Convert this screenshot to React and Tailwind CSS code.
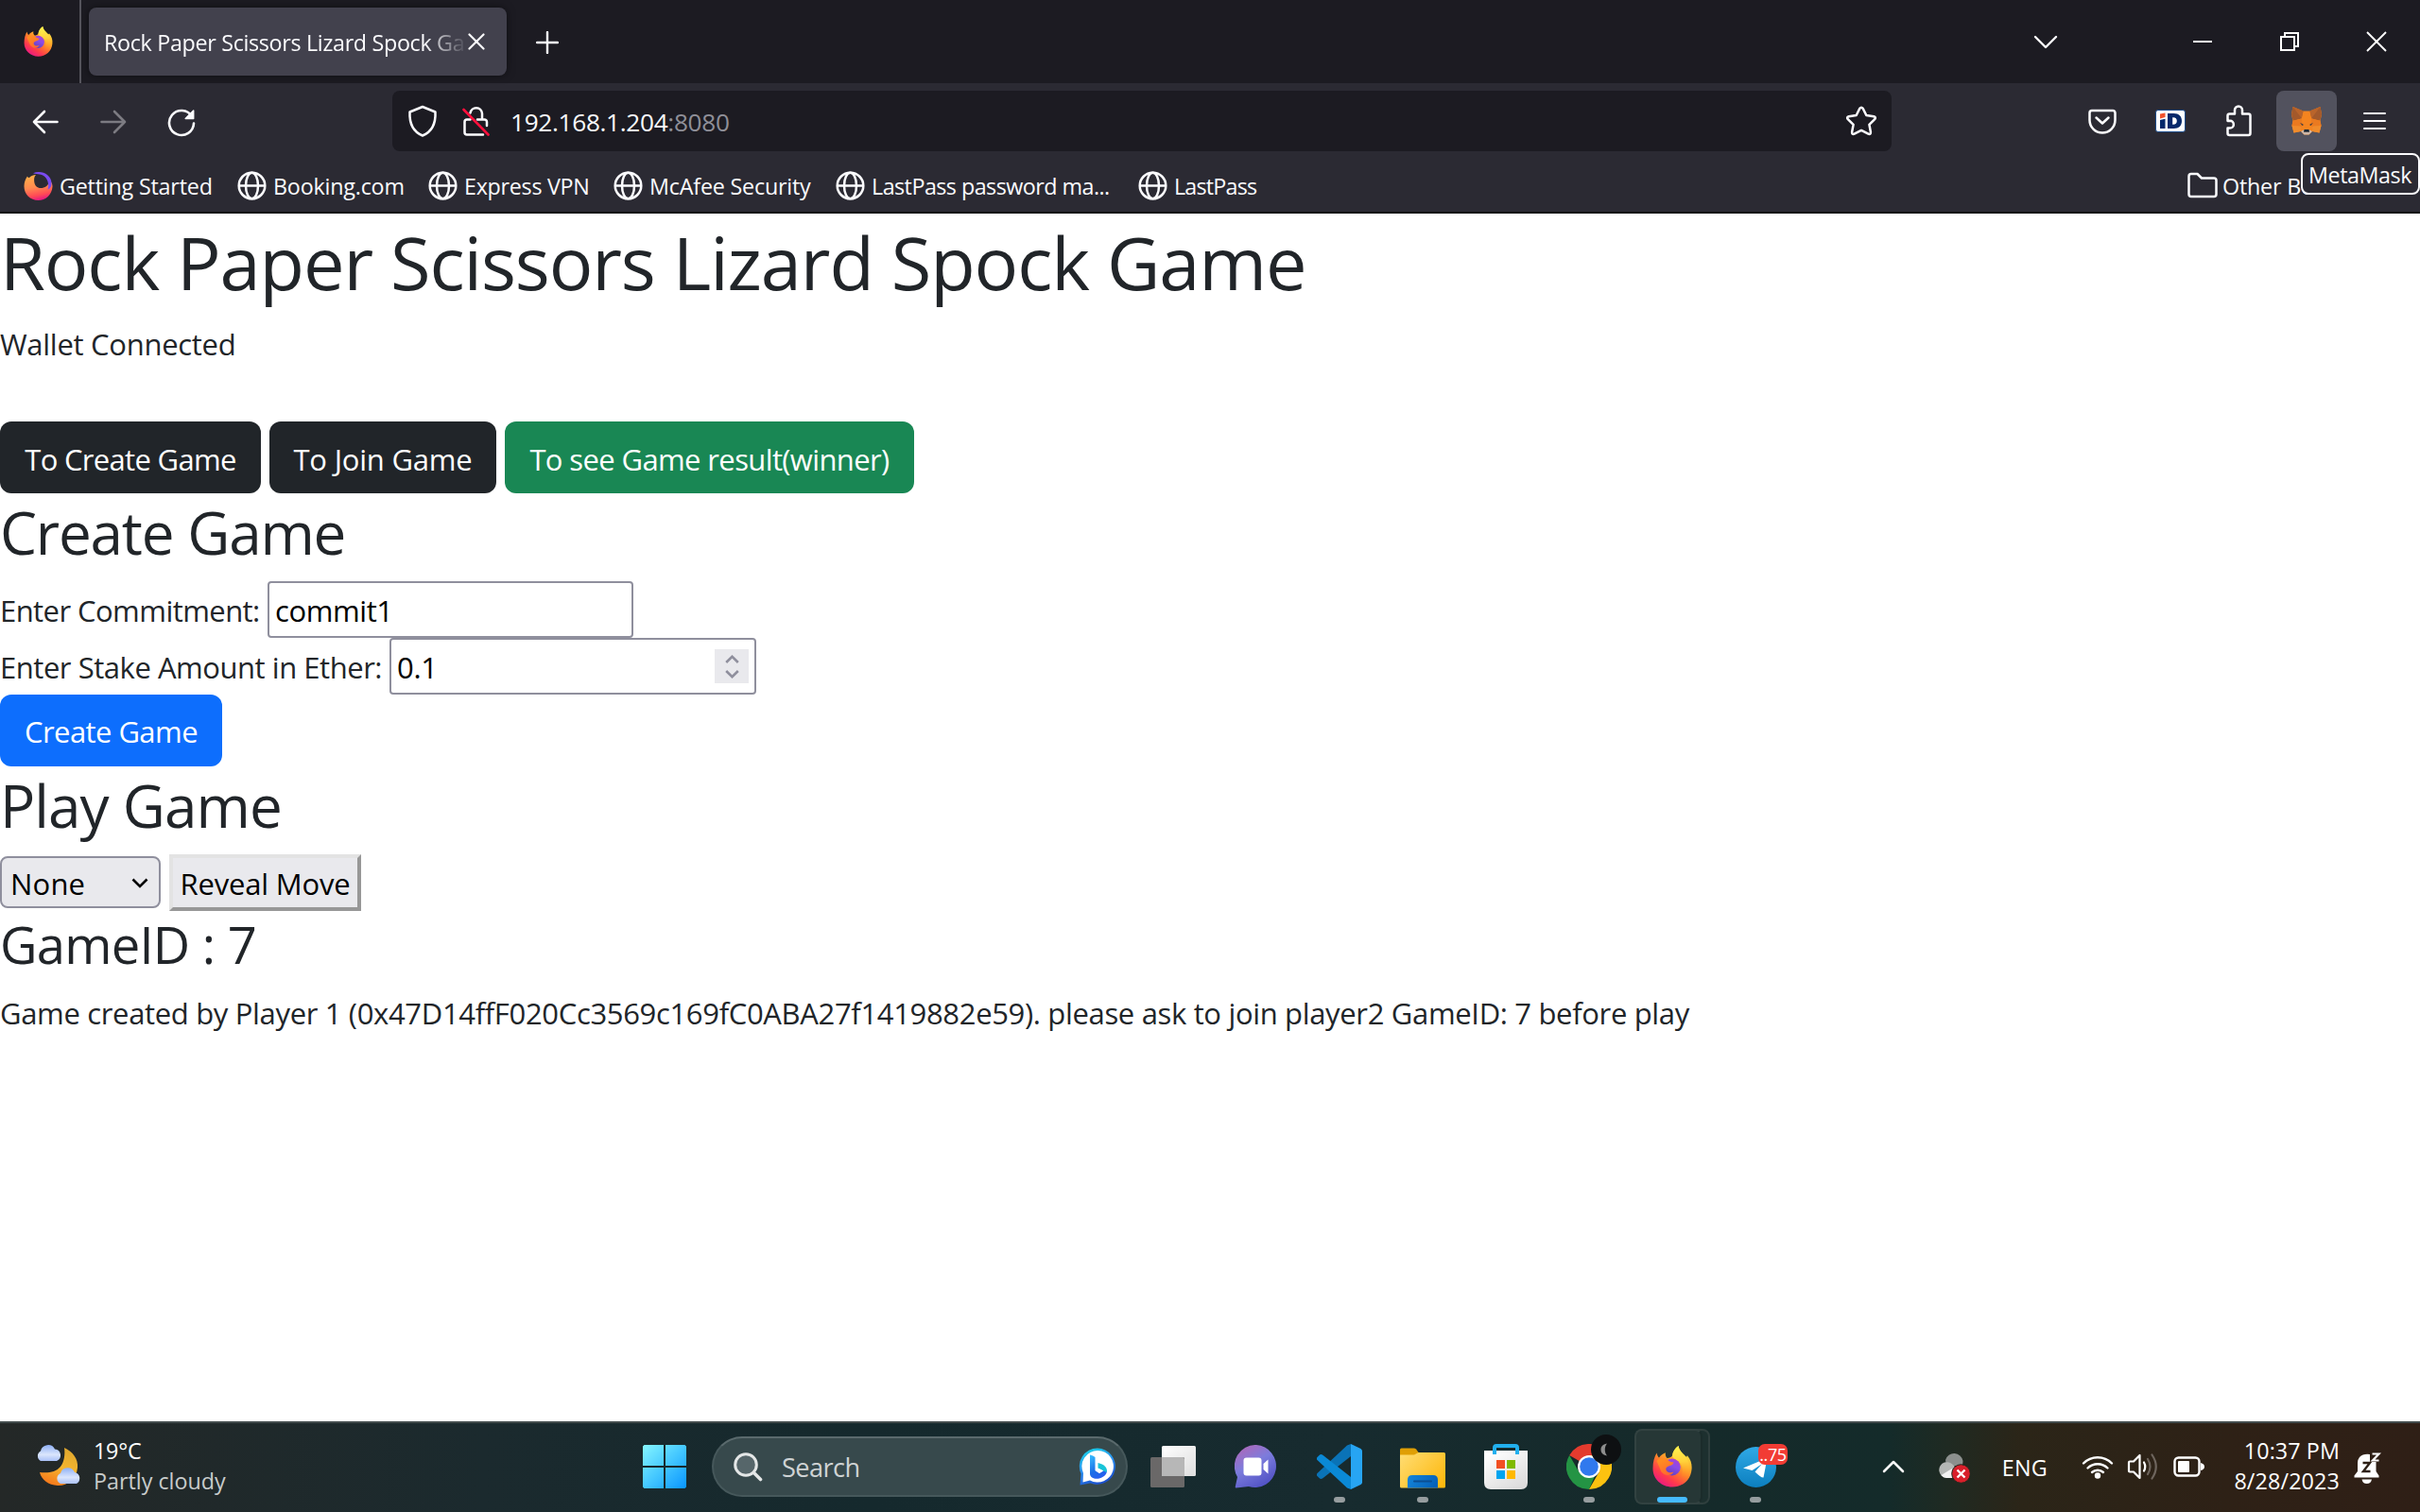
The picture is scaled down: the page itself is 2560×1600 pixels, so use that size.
import React from 'react';

function FirefoxLogo({ className, id }) {
  return (
    <svg className={className} viewBox="0 0 42 44" fill="none">
      <defs>
        <linearGradient id={`${id}-body`} x1="34" y1="4" x2="8" y2="42" gradientUnits="userSpaceOnUse">
          <stop offset="0" stopColor="#ffe847" />
          <stop offset=".3" stopColor="#ffb02a" />
          <stop offset=".52" stopColor="#ff7a2c" />
          <stop offset=".75" stopColor="#ff3a4c" />
          <stop offset="1" stopColor="#e5158a" />
        </linearGradient>
        <linearGradient id={`${id}-tail`} x1="28" y1="0" x2="32" y2="34" gradientUnits="userSpaceOnUse">
          <stop offset="0" stopColor="#fff44f" />
          <stop offset=".5" stopColor="#ffd13a" />
          <stop offset="1" stopColor="#ff8b1e" stopOpacity="0" />
        </linearGradient>
        <linearGradient id={`${id}-globe`} x1="26" y1="12" x2="16" y2="32" gradientUnits="userSpaceOnUse">
          <stop offset="0" stopColor="#b43fd0" />
          <stop offset=".45" stopColor="#8a4be8" />
          <stop offset="1" stopColor="#5b3fb5" />
        </linearGradient>
        <linearGradient id={`${id}-face`} x1="6" y1="10" x2="16" y2="30" gradientUnits="userSpaceOnUse">
          <stop offset="0" stopColor="#ff9a1c" />
          <stop offset="1" stopColor="#ff6a2e" />
        </linearGradient>
      </defs>
      <path
        d="M4.5 7.5C5 10 6 11.5 7 12.5C9 9.5 12 8 14 7.3C13.3 9 14 11.5 15.5 13C18 12.8 20 12 21 10.5C21.5 6 24 2.5 27.5 0C28 4 31 7 34 10C35.8 12 36.5 12 36.8 10C41 15 42 20 41.5 25C40.5 36 32 43.5 21 43.5C9.5 43.5.5 35 .5 24C.5 17 2 12 4.5 7.5Z"
        fill={`url(#${id}-body)`}
      />
      <path
        d="M27.5 0C28 4 31 7 34 10C39 15 40 22 37.5 28C36 33 32 36 28 36.5C32 32 33 26 30.5 20C28.5 15.5 21.5 14 21 10.5C21.5 6 24 2.500 27.500 0Z"
        fill={`url(#${id}-tail)`}
      />
      <circle cx="20.800" cy="22.500" r="9" fill={`url(#${id}-globe)`} />
      <path
        d="M4.500 16C7 12.500 12 12.500 15.500 13.500C16.500 15.500 18 17 22.500 17.600C22 19.800 20.500 20.600 17.500 21.300C14.500 22.300 13.600 24.200 14.800 26.200C16.400 28.800 20 28.600 22.500 27.600C20 32.500 13 32 9.500 27.500Z"
        fill={`url(#${id}-face)`}
      />
    </svg>
  );
}

function FirefoxSwirl({ className }) {
  return (
    <svg className={className} viewBox="0 0 31 31" fill="none">
      <defs>
        <linearGradient id="swirl" x1="12" y1="2" x2="18" y2="31" gradientUnits="userSpaceOnUse">
          <stop offset="0" stopColor="#ffb347" />
          <stop offset=".5" stopColor="#ff8a50" />
          <stop offset=".8" stopColor="#ff4a55" />
          <stop offset="1" stopColor="#e31587" />
        </linearGradient>
      </defs>
      <path
        d="M4 5.500C4.500 7 5.500 7.500 6.500 6.500C8 5 10.500 4 13 4C11 6 11 8 11.200 11C11.500 15.500 14.500 18 18 18C22.500 18 26 16 27.500 10C30 12 30.500 14 30.500 16.500C30 25 23.500 31 15.500 31C7 31 .5 24.500.5 16C.5 12 2 8 4 5.500Z"
        fill="url(#swirl)"
      />
      <path d="M10 2.200C18-1.500 29.500 3 29.500 13C29.500 17 27.500 19 25.500 19.500C27.500 13 25 5 17 3.500C14.500 3 12 3 10 2.200Z" fill="#7a4bf0" />
    </svg>
  );
}

function Globe() {
  return (
    <svg className="h-[31px] w-[31px]" viewBox="0 0 31 31" fill="none" stroke="#fbfbfe" strokeWidth="2.500">
      <circle cx="15.500" cy="15.500" r="13.800" />
      <ellipse cx="15.500" cy="15.500" rx="6.500" ry="13.800" />
      <path d="M2 15.500H29" />
    </svg>
  );
}

function TabBar() {
  return (
    <div className="flex h-[88px] bg-[#1c1b22]">
      <div className="flex w-[86px] items-center justify-center border-r-2 border-[#55545c]">
        <FirefoxLogo id="corner" className="mr-[4px] h-[32px] w-[31px]" />
      </div>
      <div className="mt-2 ml-2 flex h-[72px] w-[442px] items-center rounded-lg bg-[#42414d] shadow-[0_0_8px_rgba(0,0,0,0.5)]">
        <div className="ml-[16px] w-[381px] overflow-hidden pt-[3px] text-[23.3px] tracking-[-0.32px] whitespace-nowrap [mask-image:linear-gradient(to_right,black_89%,transparent_101%)]">
          Rock Paper Scissors Lizard Spock Game
        </div>
        <svg className="ml-[4px] h-[18px] w-[18px] shrink-0" viewBox="0 0 18 18" stroke="#fbfbfe" strokeWidth="2.200" strokeLinecap="round">
          <path d="M1.500 1.500L16.500 16.500M16.500 1.500L1.500 16.500" />
        </svg>
      </div>
      <div className="flex w-[86px] items-center justify-center">
        <svg className="mt-[2px] h-[24px] w-[24px]" viewBox="0 0 24 24" stroke="#fbfbfe" strokeWidth="2.400" strokeLinecap="round">
          <path d="M12 1V23M1 12H23" />
        </svg>
      </div>
      <div className="ml-auto flex items-center">
        <div className="mr-[74px] flex w-[92px] justify-center">
          <svg className="h-[15px] w-[26px]" viewBox="0 0 26 15" fill="none" stroke="#fbfbfe" strokeWidth="2.400" strokeLinecap="round" strokeLinejoin="round">
            <path d="M2 2L13 13L24 2" />
          </svg>
        </div>
        <div className="flex w-[92px] justify-center">
          <div className="h-[2px] w-[20px] bg-white" />
        </div>
        <div className="flex w-[92px] justify-center">
          <svg className="h-[20px] w-[20px]" viewBox="0 0 20 20" fill="none" stroke="#fff" strokeWidth="2">
            <path d="M1 5H15V19H1ZM5 5V1H19V15H15" />
          </svg>
        </div>
        <div className="flex w-[92px] justify-center">
          <svg className="h-[22px] w-[22px]" viewBox="0 0 22 22" stroke="#fff" strokeWidth="1.900">
            <path d="M1 1L21 21M21 1L1 21" />
          </svg>
        </div>
      </div>
    </div>
  );
}

function NavBar() {
  const cell = 'flex h-[80px] w-[72px] shrink-0 items-center justify-center';
  return (
    <div className="flex h-[80px] items-center pr-3 pl-3">
      <div className={cell}>
        <svg className="mt-[2px] h-[26px] w-[28px]" viewBox="0 0 28 26" fill="none" stroke="#fbfbfe" strokeWidth="2.600" strokeLinecap="round" strokeLinejoin="round">
          <path d="M13 2L2 13L13 24M2 13H26.500" />
        </svg>
      </div>
      <div className={cell}>
        <svg className="mt-[2px] h-[26px] w-[28px]" viewBox="0 0 28 26" fill="none" stroke="#7c7b82" strokeWidth="2.600" strokeLinecap="round" strokeLinejoin="round">
          <path d="M15 2L26 13L15 24M26 13H1.500" />
        </svg>
      </div>
      <div className={cell}>
        <svg className="mt-[3px] h-[30px] w-[30px]" viewBox="0 0 30 30" fill="none" stroke="#fbfbfe" strokeWidth="2.600" strokeLinecap="round">
          <path d="M26 8A13 13 0 1 0 28 15.500" />
          <path d="M27.700 2V10.500H19.200Z" fill="#fbfbfe" strokeLinejoin="round" strokeWidth="1.500" />
        </svg>
      </div>
      <div className="ml-[187px] flex h-[64px] w-[1586px] items-center rounded-lg bg-[#1c1b22] pr-[15px] pl-[16px]">
        <svg className="h-[34px] w-[32px]" viewBox="0 0 32 34" fill="none" stroke="#fbfbfe" strokeWidth="2.500" strokeLinejoin="round">
          <path d="M16 2L29.500 7.500C30 18 27 28 16 32.500C5 28 2 18 2.500 7.500Z" />
        </svg>
        <svg className="ml-[26px] h-[34px] w-[30px]" viewBox="0 0 30 34" fill="none" stroke="#fbfbfe" strokeWidth="2.500" strokeLinecap="round">
          <path d="M8.500 8.500A6.300 6.300 0 0 1 21 9V15.500M16 15.500H23.500A2.500 2.500 0 0 1 26 18V22M8.500 15.500H5A2.500 2.500 0 0 0 2.500 18V29A2.500 2.500 0 0 0 5 31.500H22" />
          <path d="M1.500 5L27.500 31.500" stroke="#ff0f3c" strokeWidth="2.600" />
        </svg>
        <div className="ml-[21px] pt-[4px] text-[26.2px] tracking-[-0.31px] text-[#fbfbfe]">
          192.168.1.204<span className="text-[#8f8f98]">:8080</span>
        </div>
        <svg className="ml-auto h-[32px] w-[34px]" viewBox="0 0 34 32" fill="none" stroke="#fbfbfe" strokeWidth="2.500" strokeLinejoin="round">
          <path d="M15.300 2.800Q17 .6 18.700 2.800L22.300 10L30.200 11.200Q33 12 31.200 14.200L25.400 19.800L26.900 27.800Q27 30.700 24.400 29.700L17 25.900L9.600 29.700Q7 30.700 7.100 27.800L8.600 19.800L2.800 14.200Q1 12 3.800 11.200L11.700 10Z" />
        </svg>
      </div>
      <div className="ml-auto flex">
        <div className={cell}>
          <svg className="h-[27px] w-[30px]" viewBox="0 0 30 27" fill="none" stroke="#fbfbfe" strokeWidth="2.500" strokeLinecap="round" strokeLinejoin="round">
            <path d="M4 2H26A2.500 2.500 0 0 1 28.500 4.500V12A13.500 13.500 0 0 1 1.500 12V4.500A2.500 2.500 0 0 1 4 2Z" />
            <path d="M8.500 9.500L15 15.500L21.500 9.500" />
          </svg>
        </div>
        <div className={cell}>
          <svg className="h-[24px] w-[32px]" viewBox="0 0 32 24">
            <rect x=".5" y=".5" width="31" height="23" rx="2.500" fill="#fff" stroke="#1d4c8a" />
            <path d="M5 4.500L10.500 3.500V8L5 9.500Z" fill="#f0532d" />
            <path d="M5 11L10.500 9.700V20H5Z" fill="#06296b" />
            <path d="M13 4H19.500C25 4 28 7 28 12S25 20 19.500 20H13ZM18.200 8.200V15.800C21.500 16 22.800 14.500 22.800 12S21.500 8 18.200 8.200Z" fill="#06296b" fillRule="evenodd" />
          </svg>
        </div>
        <div className={cell}>
          <svg className="h-[34px] w-[28px]" viewBox="0 0 28 34" fill="none" stroke="#fbfbfe" strokeWidth="2.500" strokeLinejoin="round">
            <path d="M2.500 17V11.500Q2.500 9.500 4.500 9.500H10V5.500A4 4 0 0 1 18 5.500V9.500H24.500Q26.500 9.500 26.500 11.500V30Q26.500 32 24.500 32H4.500Q2.500 32 2.500 30V24.500H5A3.800 3.800 0 0 0 5 16.800Z" />
          </svg>
        </div>
        <div className="relative flex h-[80px] w-[72px] items-center justify-center">
          <div className="flex h-[64px] w-[64px] items-center justify-center rounded-lg bg-[#52525e]">
            <svg className="h-[30px] w-[32px]" viewBox="0 0 32 30">
              <path d="M1.500 0L12.500 4.500H19.500L30.500 0L32 8L30.500 15L31.500 20L29.500 27.500L22 26L18.500 29.500H13.500L10 26L2.500 27.500L.5 20L1.500 15L0 8Z" fill="#f5841f" />
              <path d="M1.500 0L12.500 4.500L10.500 12.500L2.500 14.500L1.500 14L0 8Z" fill="#a3592b" />
              <path d="M30.500 0L19.500 4.500L21.500 12.500L29.500 14.500L30.500 14L32 8Z" fill="#a3592b" />
              <path d="M1.500 0L10.800 12.300L12.500 4.500ZM30.500 0L21.200 12.300L19.500 4.500Z" fill="#b9642b" />
              <path d="M1.500 15L10.500 12.500L12 19L10 21L.5 20Z" fill="#ea7a20" />
              <path d="M30.500 15L21.500 12.500L20 19L22 21L31.500 20Z" fill="#ea7a20" />
              <path d="M.5 20L9.500 20.500L10 26L2.500 27.500ZM31.500 20L22.500 20.500L22 26L29.500 27.500Z" fill="#f08c2c" />
              <path d="M9 16.800L13 19L11.500 20ZM23 16.800L19 19L20.500 20Z" fill="#3a3a44" />
              <path d="M10 26L13 24.500H19L22 26L18.500 29.500H13.500Z" fill="#cdb7a8" />
              <path d="M13.500 24H18.500L19 26.800H13Z" fill="#1c2733" />
            </svg>
          </div>
          <div className="absolute top-[74px] left-[30px] z-10 flex h-[44px] w-[126px] items-center rounded-lg border-2 border-[#fbfbfe] bg-[#2b2a33] pt-[2px] pl-[6px] text-[23.3px] tracking-[-0.45px] text-[#fbfbfe]">
            MetaMask
          </div>
        </div>
        <div className={cell}>
          <div className="flex flex-col gap-[6px] pb-px">
            <div className="h-[2px] w-[24px] rounded bg-[#fbfbfe]" />
            <div className="h-[2px] w-[24px] rounded bg-[#fbfbfe]" />
            <div className="h-[2px] w-[24px] rounded bg-[#fbfbfe]" />
          </div>
        </div>
      </div>
    </div>
  );
}

function Bookmarks() {
  const item = 'flex shrink-0 items-center gap-[7px]';
  return (
    <div className="flex h-[56px] items-center overflow-hidden pl-[25px] text-[23.3px] whitespace-nowrap text-[#fbfbfe]">
      <div className={`${item} w-[226px]`}>
        <FirefoxSwirl className="h-[31px] w-[31px]" />
        <span className="pt-[2px] tracking-[-0.2px]">Getting Started</span>
      </div>
      <div className={`${item} w-[202px]`}><Globe /><span className="pt-[2px] tracking-[-0.2px]">Booking.com</span></div>
      <div className={`${item} w-[196px]`}><Globe /><span className="pt-[2px] tracking-[-0.28px]">Express VPN</span></div>
      <div className={`${item} w-[235px]`}><Globe /><span className="pt-[2px] tracking-[-0.2px]">McAfee Security</span></div>
      <div className={`${item} w-[320px]`}><Globe /><span className="pt-[2px] tracking-[-0.53px]">LastPass password ma...</span></div>
      <div className={item}><Globe /><span className="pt-[2px] tracking-[-0.8px]">LastPass</span></div>
      <div className="ml-auto flex w-[246px] items-center gap-[5px]">
        <svg className="h-[28px] w-[32px] shrink-0" viewBox="0 0 32 28" fill="none" stroke="#fbfbfe" strokeWidth="2.500" strokeLinejoin="round">
          <path d="M4 2H10.500L15 6.500H28Q30.500 6.500 30.500 9V23.500Q30.500 26 28 26H4Q1.500 26 1.500 23.500V4.500Q1.500 2 4 2Z" />
        </svg>
        <span className="pt-[2px] tracking-[-0.2px]">Other Bookmarks</span>
      </div>
    </div>
  );
}

function GamePage() {
  return (
    <main className="h-[1278px] bg-white text-[31px] leading-[48px] text-[#212529]">
      <h1 className="h-[96px] pt-[3px] text-[77.6px] leading-[96px] tracking-[-1.12px]">Rock Paper Scissors Lizard Spock Game</h1>
      <p className="mt-4 h-[48px] pt-[2px] tracking-[-0.28px]">Wallet Connected</p>
      <div className="mt-[60px] flex gap-[9px] text-white">
        <button className="h-[76px] w-[276px] rounded-xl bg-[#212529] pt-[4px] tracking-[-0.68px]">To Create Game</button>
        <button className="h-[76px] w-[240px] rounded-xl bg-[#212529] pt-[4px] tracking-[-0.21px]">To Join Game</button>
        <button className="h-[76px] w-[433px] rounded-xl bg-[#198754] pt-[4px] tracking-[-0.62px]">To see Game result(winner)</button>
      </div>

      <h2 className="h-[77px] pt-[3px] text-[62px] leading-[77px] tracking-[-1.2px]">Create Game</h2>
      <div className="mt-4 flex h-[60px] items-center">
        <label className="w-[283px] pt-[2px] tracking-[-0.56px]">Enter Commitment:</label>
        <input className="h-[60px] w-[387px] rounded-[4px] border-2 border-[#8f8f9d] px-[6px] pt-[2px] tracking-[-0.4px] text-black" readOnly value="commit1" />
      </div>
      <div className="flex h-[60px] items-center">
        <label className="w-[412px] pt-[2px] tracking-[-0.46px]">Enter Stake Amount in Ether:</label>
        <div className="flex h-[60px] w-[388px] items-center rounded-[4px] border-2 border-[#8f8f9d] pr-[6px] pl-[6px] text-black">
          <input className="w-[300px] pt-[2px] tracking-[-0.3px]" readOnly value="0.1" />
          <div className="ml-auto flex h-[36px] w-[36px] flex-col items-center justify-center gap-[7px] bg-[#e9e9ed]">
            <svg className="h-[9px] w-[15px]" viewBox="0 0 15 9" fill="none" stroke="#8f8f9d" strokeWidth="2.600"><path d="M1.200 8L7.500 1.800L13.800 8" /></svg>
            <svg className="h-[9px] w-[15px]" viewBox="0 0 15 9" fill="none" stroke="#8f8f9d" strokeWidth="2.600"><path d="M1.200 1L7.500 7.200L13.800 1" /></svg>
          </div>
        </div>
      </div>
      <button className="block h-[76px] w-[235px] rounded-xl bg-[#0d6efd] pt-[2px] tracking-[-0.56px] text-white">Create Game</button>

      <h2 className="h-[77px] pt-[3px] text-[62px] leading-[77px] tracking-[-0.95px]">Play Game</h2>
      <div className="mt-4 flex h-[60px] items-start gap-[9px] text-black">
        <div className="mt-[2px] flex h-[55px] w-[170px] items-center justify-between rounded-lg border-2 border-[#8f8f9d] bg-[#e9e9ed] pr-[11px] pl-[9px]">
          <span className="pt-[3px] tracking-[0.2px]">None</span>
          <svg className="mt-[2px] h-[11px] w-[18px]" viewBox="0 0 18 11" fill="none" stroke="#000" strokeWidth="2.600"><path d="M1.500 1.500L9 9L16.500 1.500" /></svg>
        </div>
        <button className="h-[60px] w-[203px] border-4 border-t-[#e3e3e3] border-r-[#979797] border-b-[#979797] border-l-[#e3e3e3] bg-[#e9e9ed] pt-px leading-[50px] tracking-[-0.2px]">Reveal Move</button>
      </div>
      <h3 className="h-[67px] pt-[2px] text-[54.3px] leading-[67px] tracking-[-0.75px]">GameID : 7</h3>
      <p className="mt-4 h-[48px] pt-px tracking-[-0.335px]">
        Game created by Player 1 (0x47D14ffF020Cc3569c169fC0ABA27f1419882e59). please ask to join player2 GameID: 7 before play
      </p>
    </main>
  );
}

function Weather() {
  return (
    <svg className="mb-[5px] h-[45px] w-[50px]" viewBox="0 0 50 45">
      <defs>
        <linearGradient id="moon" x1="36" y1="6" x2="20" y2="44" gradientUnits="userSpaceOnUse">
          <stop offset="0" stopColor="#e0a82e" /><stop offset=".5" stopColor="#f5b52e" /><stop offset="1" stopColor="#f57a1c" />
        </linearGradient>
        <linearGradient id="cloud" x1="0" y1="0" x2="0" y2="1">
          <stop offset="0" stopColor="#8fb0f5" /><stop offset=".6" stopColor="#dbe6fc" /><stop offset="1" stopColor="#a9c0f7" />
        </linearGradient>
      </defs>
      <path d="M31 4C40 8 46 16 45 25C44 37 34 44.500 24 44C14 43.500 7 38 5 30C14 31 22 30 27 24C31 19 32 11 31 4Z" fill="url(#moon)" />
      <path d="M6 18A6 6 0 0 1 6 7.500A8 8 0 0 1 21 5.500A6.500 6.500 0 0 1 23 18Z" fill="url(#cloud)" />
      <path d="M27 42A6 6 0 0 1 27 31A8 8 0 0 1 42 30A6.500 6.500 0 0 1 44 42Z" fill="url(#cloud)" />
    </svg>
  );
}

function AppCell({ children, mark }) {
  return (
    <div className="relative flex h-[94px] w-[88px] shrink-0 items-center justify-center pb-[2px]">
      {children}
      {mark && <div className="absolute bottom-[10px] left-[38px] h-[6px] w-[12px] rounded-full bg-[#969d9f]" />}
    </div>
  );
}

function Taskbar() {
  return (
    <footer className="flex h-[96px] items-center overflow-hidden border-t-2 border-[#434c4d] bg-[linear-gradient(to_right,#242827_0%,#1b2a2e_20%,#15292d_36%,#172b2f_55%,#152a2a_70%,#142b2a_78%,#1f2a22_80.500%,#2b2518_83.500%,#2e2116_92%,#2f1f16_100%)]">
      <div className="flex w-[659px] items-center pl-[37px]">
        <Weather />
        <div className="mb-[4px] ml-[12px] text-[23.3px] leading-[32px]">
          <div className="tracking-[-0.2px] text-white">19°C</div>
          <div className="text-[#c8cbcb]">Partly cloudy</div>
        </div>
      </div>

      <AppCell>
        <svg className="h-[46px] w-[46px]" viewBox="0 0 46 46">
          <defs>
            <linearGradient id="win" x1="0" y1="0" x2="46" y2="46" gradientUnits="userSpaceOnUse">
              <stop offset="0" stopColor="#86f6ff" /><stop offset=".5" stopColor="#45c8ff" /><stop offset="1" stopColor="#0995ff" />
            </linearGradient>
          </defs>
          <path d="M1.500 0H22V22H0V1.500ZM24 0H44.500L46 1.500V22H24ZM0 24H22V46H1.500L0 44.500ZM24 24H46V44.500L44.500 46H24Z" fill="url(#win)" />
        </svg>
      </AppCell>

      <div className="mb-[2px] ml-[6px] flex h-[64px] w-[440px] shrink-0 items-center rounded-full border-2 border-[#46585b] border-t-[#5a6a6d] bg-[#37494c] pl-[21px]">
        <svg className="h-[31px] w-[31px]" viewBox="0 0 31 31" fill="none" stroke="#e4e7e7" strokeWidth="3" strokeLinecap="round">
          <circle cx="13" cy="13" r="11.300" fill="#56666a" />
          <path d="M21.500 21.500L28.500 28.500" strokeWidth="3.600" />
        </svg>
        <span className="ml-[20px] pt-[2px] text-[27.2px] tracking-[-0.6px] text-[#cfd3d4]">Search</span>
        <svg className="mr-[10px] ml-auto h-[40px] w-[40px]" viewBox="0 0 40 40">
          <defs>
            <linearGradient id="bing-ring" x1="8" y1="2" x2="24" y2="40" gradientUnits="userSpaceOnUse">
              <stop offset="0" stopColor="#1ccfe8" /><stop offset=".5" stopColor="#2a8cf0" /><stop offset="1" stopColor="#1a49c8" />
            </linearGradient>
            <linearGradient id="bing-b" x1="12" y1="8" x2="26" y2="32" gradientUnits="userSpaceOnUse">
              <stop offset="0" stopColor="#37bdff" /><stop offset=".6" stopColor="#1b6fe6" /><stop offset="1" stopColor="#2a5cf0" />
            </linearGradient>
          </defs>
          <path d="M20 .5A19.200 19.200 0 1 1 12.500 37.500L1.500 39.500L2.500 27.500A19.200 19.200 0 0 1 20 .5Z" fill="url(#bing-ring)" />
          <path d="M20.500 3A16.800 16.800 0 1 1 12 34.500L4.500 36.500L5 27A16.800 16.800 0 0 1 20.500 3Z" fill="#fff" />
          <path d="M12 7.500Q15.500 8 17.500 10V24L22 27L29 22.500C31.500 26 28 30 24.500 31.500C20 34 12 33 12 27.500Z" fill="url(#bing-b)" />
          <path d="M20.500 16C27 17.500 31 21 29.500 26L20.500 21.500Z" fill="#18c4d8" />
          <path d="M17.500 24L22 27L26 24.500L22.500 22.500Z" fill="#fff" />
        </svg>
      </div>

      <div className="ml-[4px] flex">
        <AppCell>
          <svg className="h-[44px] w-[48px]" viewBox="0 0 48 44">
            <defs>
              <linearGradient id="tv" x1="0" y1="0" x2="1" y2="1"><stop offset="0" stopColor="#fff" /><stop offset="1" stopColor="#dedede" /></linearGradient>
            </defs>
            <rect x="12" y="0" width="36" height="32" rx="1.500" fill="url(#tv)" />
            <rect x="0" y="12" width="36" height="32" rx="1.500" fill="#6a6868" />
            <path d="M12 12H34.500L36 13.500V32H12Z" fill="#b7b7b7" />
          </svg>
        </AppCell>
        <AppCell>
          <svg className="h-[46px] w-[46px]" viewBox="0 0 46 46">
            <defs>
              <linearGradient id="chat" x1="4" y1="2" x2="30" y2="46" gradientUnits="userSpaceOnUse"><stop offset="0" stopColor="#b067b8" /><stop offset=".45" stopColor="#7c7cdc" /><stop offset="1" stopColor="#4f50c4" /></linearGradient>
            </defs>
            <path d="M23 0A22.500 22.500 0 1 1 15 44L1.500 45.500Q.5 45.500.8 44L3 34A22.500 22.500 0 0 1 23 0Z" fill="url(#chat)" />
            <rect x="9.500" y="13.500" width="19" height="19" rx="3" fill="#fff" />
            <path d="M30.500 20L35.500 15.500V30.500L30.500 26Z" fill="#fff" />
          </svg>
        </AppCell>
        <AppCell mark>
          <svg className="h-[48px] w-[48px]" viewBox="0 0 48 48">
            <path d="M36 0V13L6 36.500Q4 37.500 2.500 36L.5 34Q-.8 32.500.5 31L32 1.500Z" fill="#0a73b7" />
            <path d="M36 48V35L6 11.500Q4 10.500 2.500 12L.5 14Q-.8 15.500.5 17L32 46.500Z" fill="#0a89d6" />
            <path d="M36 0L46.500 5Q48 6 48 7.500V40.500Q48 42 46.500 43L36 48Z" fill="#27a5f3" />
          </svg>
        </AppCell>
        <AppCell mark>
          <svg className="mt-[2px] h-[43px] w-[48px]" viewBox="0 0 48 43">
            <defs>
              <linearGradient id="folder" x1="4" y1="6" x2="44" y2="42" gradientUnits="userSpaceOnUse"><stop offset="0" stopColor="#ffdb6e" /><stop offset="1" stopColor="#fdb80e" /></linearGradient>
              <linearGradient id="tray" x1="10" y1="28" x2="38" y2="42" gradientUnits="userSpaceOnUse"><stop offset="0" stopColor="#1383d8" /><stop offset="1" stopColor="#0560b8" /></linearGradient>
            </defs>
            <path d="M0 2Q0 .5 1.500.5H14.500Q16 .5 17 1.500L20 5.500V12H0Z" fill="#e09f05" />
            <path d="M0 7.500H15L19.500 5H46.500Q48 5 48 6.500V41Q48 42.500 46.500 42.500H1.500Q0 42.500 0 41Z" fill="url(#folder)" />
            <path d="M8 42.500V34Q8 29 13 29H35Q40 29 40 34V42.500Z" fill="url(#tray)" />
            <path d="M15 35.500H33" stroke="#0b4f93" strokeWidth="2" strokeLinecap="round" />
          </svg>
        </AppCell>
        <AppCell>
          <svg className="h-[48px] w-[46px]" viewBox="0 0 46 48">
            <defs>
              <linearGradient id="bag" x1="10" y1="7" x2="34" y2="48" gradientUnits="userSpaceOnUse"><stop offset="0" stopColor="#fff" /><stop offset="1" stopColor="#dcdcdc" /></linearGradient>
            </defs>
            <path d="M0 7H46V41Q46 48 39 48H7Q0 48 0 41Z" fill="url(#bag)" />
            <path d="M11 11V4Q11 2 13 2H33Q35 2 35 4V11" fill="none" stroke="#21b0ee" strokeWidth="4" />
            <path d="M13 17H22V26H13Z" fill="#f25022" /><path d="M24 17H33V26H24Z" fill="#7fba00" />
            <path d="M13 28H22V37H13Z" fill="#00a4ef" /><path d="M24 28H33V37H24Z" fill="#ffb900" />
          </svg>
        </AppCell>
        <AppCell mark>
          <svg className="h-[48px] w-[48px]" viewBox="0 0 48 48">
            <path d="M24 24L3.200 12A24 24 0 0 1 44.800 12H24Z" fill="#e33b2e" />
            <path d="M24 24H34.400L24 48A24 24 0 0 1 3.200 12L13.600 30Z" fill="#249444" />
            <path d="M24 12H44.800A24 24 0 0 1 24 48L34.400 30Z" fill="#fcc210" />
            <circle cx="24" cy="24" r="12" fill="#fff" />
            <circle cx="24" cy="24" r="9.800" fill="#3079ee" />
          </svg>
          <div className="absolute top-[12px] left-[46px] flex h-[32px] w-[32px] items-center justify-center rounded-full bg-[#0e1012]">
            <svg className="mr-[4px] h-[14px] w-[8px]" viewBox="0 0 8 14"><path d="M7 .5C2 1.500.5 4 .5 7S2 12.500 7 13.500C4 10 4 4 7 .5Z" fill="#8e8e8e" /></svg>
          </div>
        </AppCell>
        <AppCell>
          <div className="absolute top-[6px] left-[14px] h-[80px] w-[70px] rounded-lg border-2 border-[#2f3f3e] bg-[#1d302f]" />
          <div className="absolute top-[6px] left-[4px] h-[80px] w-[72px] rounded-lg border-2 border-[#324241] border-r-[#1b2c2b] bg-[#263736]" />
          <FirefoxLogo id="task" className="relative h-[44px] w-[42px]" />
          <div className="absolute bottom-[10px] left-[28px] h-[6px] w-[32px] rounded-full bg-[#45bbff]" />
        </AppCell>
        <AppCell mark>
          <svg className="h-[43px] w-[43px]" viewBox="0 0 43 43">
            <defs>
              <linearGradient id="tg" x1="0" y1="0" x2="0" y2="1"><stop offset="0" stopColor="#30a9e6" /><stop offset="1" stopColor="#0c7fbf" /></linearGradient>
            </defs>
            <circle cx="21.500" cy="21.500" r="21.500" fill="url(#tg)" />
            <path d="M8 22.500L32 12.500Q33.500 12.500 33 14.500L29.500 32.500Q27 33 20.500 26.500L28 18L17.500 25Z" fill="#fff" />
          </svg>
          <div className="absolute top-[22px] left-[47px] flex h-[22px] w-[31px] items-center justify-center rounded-[7px] bg-[#f23c34] text-[18px] leading-none tracking-[-0.4px] text-white">
            ..75
          </div>
        </AppCell>
      </div>

      <div className="mb-[2px] ml-auto flex shrink-0 items-center pr-[41px] text-[23.3px] text-white">
        <svg className="h-[14px] w-[24px]" viewBox="0 0 24 14" fill="none" stroke="#fff" strokeWidth="2.500" strokeLinecap="round" strokeLinejoin="round"><path d="M2 12L12 2L22 12" /></svg>
        <svg className="mt-[4px] ml-[36px] h-[34px] w-[33px]" viewBox="0 0 33 34">
          <path d="M7 8A9.500 9.500 0 0 1 25.500 9L25 14H8Z" fill="#8b8f8d" />
          <path d="M8 27A8.500 8.500 0 0 1 6 10.500Q12 9 16 14L22 20V27Z" fill="#b4b7b5" />
          <path d="M2.500 24L14 17V27H8Q4.500 26.500 2.500 24Z" fill="#f2f2f2" />
          <circle cx="23.500" cy="22.500" r="9.800" fill="#d81f2a" stroke="#20261d" />
          <path d="M19.500 18.500L27.500 26.500M27.500 18.500L19.500 26.500" stroke="#fff" strokeWidth="2.400" />
        </svg>
        <span className="ml-[34px] pt-[2px] tracking-[0.28px]">ENG</span>
        <svg className="ml-[36px] h-[26px] w-[34px]" viewBox="0 0 34 26" fill="none" stroke="#fff" strokeWidth="2.400" strokeLinecap="round">
          <path d="M2 9.500A21 21 0 0 1 32 9.500" /><path d="M6.500 14.500A15 15 0 0 1 27.500 14.500" /><path d="M11 19A9 9 0 0 1 23 19" />
          <circle cx="17" cy="22.500" r="2" fill="#fff" />
        </svg>
        <svg className="ml-[14px] h-[32px] w-[34px]" viewBox="0 0 34 32" fill="none" stroke="#fff" strokeWidth="2.200" strokeLinecap="round" strokeLinejoin="round">
          <path d="M2 11.500Q2 10.500 3 10.500H7L13.500 4V28L7 21.500H3Q2 21.500 2 20.500Z" />
          <path d="M18 11.500Q20.500 16 18 20.500" />
          <path d="M22 8Q27 16 22 24M26.500 3.500Q35 16 26.500 28.500" stroke="#6e655d" />
        </svg>
        <svg className="ml-[15px] h-[22px] w-[34px]" viewBox="0 0 34 22">
          <rect x="1.500" y="1.500" width="26" height="19" rx="4" fill="none" stroke="#fff" strokeWidth="2.400" />
          <rect x="5" y="5" width="12" height="12" rx="1" fill="#fff" />
          <path d="M29 7Q33 8 33 11T29 15Z" fill="#fff" />
        </svg>
        <div className="mb-[3px] ml-[30px] w-[112px] text-right leading-[32px]">
          <div className="tracking-[0.09px]">10:37 PM</div>
          <div className="tracking-[0.14px]">8/28/2023</div>
        </div>
        <svg className="mt-[2px] ml-[15px] h-[34px] w-[29px]" viewBox="0 0 29 34">
          <path d="M6 6Q10 2 17 3V11H23.500V21L26.500 25.500V27.500H.5V25.500L4 21V12Q4 8.500 6 6Z" fill="#fff" />
          <path d="M8.500 29.500H19Q18 34 13.700 34T8.500 29.500Z" fill="#fff" />
          <path d="M9.500 12H17L10 21H17.500" fill="none" stroke="#2e2016" strokeWidth="2.400" />
          <path d="M19.500 2.500H26.500L20 9.500H26.500" fill="none" stroke="#fff" strokeWidth="2.200" />
        </svg>
      </div>
    </footer>
  );
}

export default function App() {
  return (
    <div className="h-[1600px] w-[2560px] overflow-hidden bg-white font-['Open_Sans','Noto_Sans',sans-serif] text-[#fbfbfe]">
      <TabBar />
      <div className="h-[138px] border-b-2 border-[#0c0c0d] bg-[#2b2a33]">
        <NavBar />
        <Bookmarks />
      </div>
      <GamePage />
      <Taskbar />
    </div>
  );
}
